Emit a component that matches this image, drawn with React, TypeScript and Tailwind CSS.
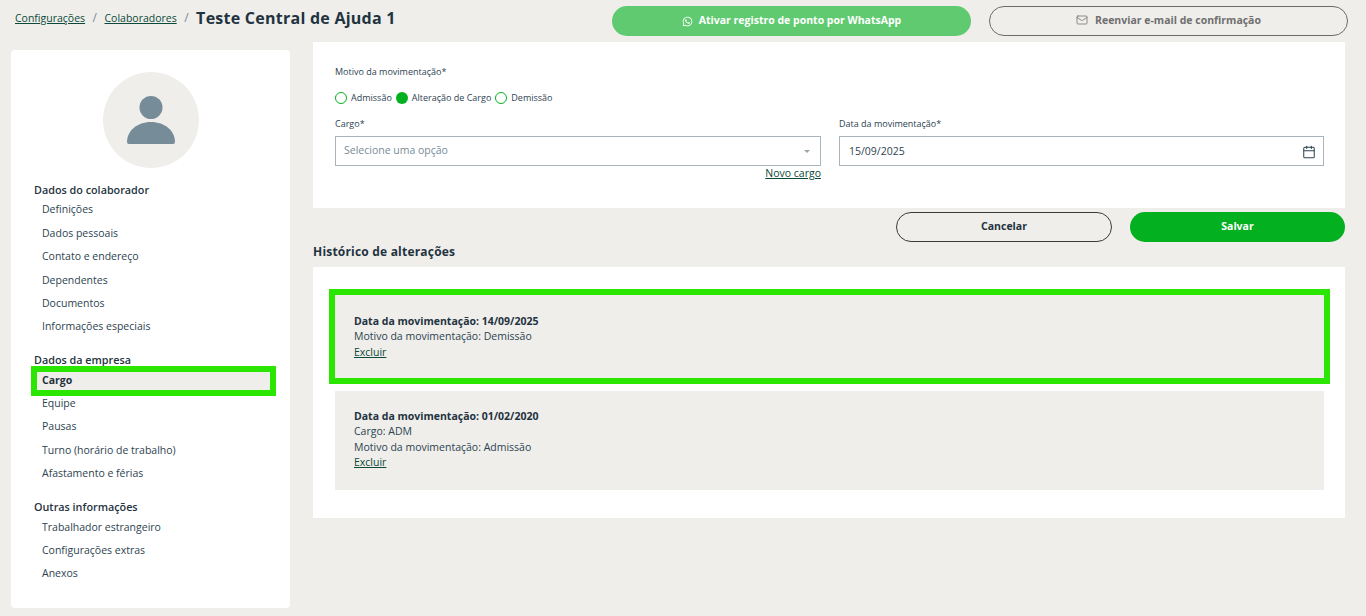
import { Mail, Calendar } from "lucide-react";
import { FaWhatsapp } from "react-icons/fa";

const font = { fontFamily: '"Open Sans", sans-serif' };

const SECTIONS = [
  {
    title: "Dados do colaborador",
    items: ["Definições", "Dados pessoais", "Contato e endereço", "Dependentes", "Documentos", "Informações especiais"],
  },
  {
    title: "Dados da empresa",
    items: ["Cargo", "Equipe", "Pausas", "Turno (horário de trabalho)", "Afastamento e férias"],
  },
  {
    title: "Outras informações",
    items: ["Trabalhador estrangeiro", "Configurações extras", "Anexos"],
  },
];

function Sidebar() {
  return (
    <aside className="w-[279px] h-[558px] shrink-0 bg-white rounded-sm pt-[22px] px-[23px]">
      <div className="mx-auto w-[96px] h-[96px] rounded-full bg-[#efeeeb] flex items-center justify-center">
        <svg width="48" height="48" viewBox="0 0 48 48" fill="#778c99">
          <circle cx="24" cy="11.5" r="11.5" />
          <path d="M0 46C0 35 10 26 24 26s24 9 24 20a2 2 0 0 1-2 2H2a2 2 0 0 1-2-2z" />
        </svg>
      </div>
      <div className="mt-[14px] flex flex-col gap-[13.5px]">
        {SECTIONS.map((s) => (
          <div key={s.title}>
            <h4 className="text-[10.8px] leading-[16px] font-semibold text-[#1f3340]">{s.title}</h4>
            <ul className="mt-[0.6px]">
              {s.items.map((item) =>
                item === "Cargo" ? (
                  <li
                    key={item}
                    className="h-[18px] mt-[3.7px] mb-[2px] ml-[3px] w-[233px] flex items-center pl-[5px] text-[10.5px] font-bold text-[#1f3340] bg-[#efeeeb] outline-[6px] outline-solid outline-[#2ae600]"
                  >
                    {item}
                  </li>
                ) : (
                  <li key={item} className="h-[23.4px] flex items-center pl-[8px] text-[10.5px] text-[#2d4350]">
                    {item}
                  </li>
                ),
              )}
            </ul>
          </div>
        ))}
      </div>
    </aside>
  );
}

function Radio({ label, checked }: { label: string; checked?: boolean }) {
  return (
    <span className="flex items-center gap-[4px]">
      <span
        className={
          checked
            ? "w-[12px] h-[12px] rounded-full bg-[#03b01f]"
            : "w-[12px] h-[12px] rounded-full border border-[#03b01f] bg-white"
        }
      />
      <span className="text-[9px] text-[#2d4350]">{label}</span>
    </span>
  );
}

function HistoryItem({ lines, highlight }: { lines: string[]; highlight?: boolean }) {
  return (
    <div
      className={
        highlight
          ? "bg-[#efeeeb] px-[19px] pt-[18.6px] h-[83px] outline-[6px] outline-solid outline-[#2ae600]"
          : "bg-[#efeeeb] px-[19px] pt-[17.6px] h-[99px]"
      }
    >
      <p className="text-[10.5px] leading-[15.5px] font-bold text-[#1f3340]">{lines[0]}</p>
      {lines.slice(1).map((l) => (
        <p key={l} className="text-[10.5px] leading-[15.5px] text-[#2d4350]">
          {l}
        </p>
      ))}
      <a className="text-[10.5px] leading-[15.5px] underline text-[#0b4a38] block">Excluir</a>
    </div>
  );
}

export default function App() {
  return (
    <div className="w-[1366px] h-[616px] overflow-hidden bg-[#efeeeb] flex flex-col" style={font}>
      <header className="h-[42px] shrink-0 flex items-center pl-[15px] pr-[18px]">
        <nav className="flex items-center h-[36px] w-[597px] -mt-[6px]">
          <a className="mt-[1px] text-[10.5px] underline text-[#0b4a38]">Configurações</a>
          <span className="text-[12px] text-[#778c99] mx-[7.5px]">/</span>
          <a className="mt-[1px] text-[10.5px] underline text-[#0b4a38]">Colaboradores</a>
          <span className="text-[12px] text-[#778c99] mx-[7.5px]">/</span>
          <h1 className="text-[16px] font-bold text-[#1f3340] tracking-[0.25px]">Teste Central de Ajuda 1</h1>
        </nav>
        <button className="w-[359px] h-[30px] rounded-[15px] bg-[#60ca70] text-white text-[10.5px] font-bold flex items-center justify-center gap-[6px]">
          <FaWhatsapp size={11} />
          Ativar registro de ponto por WhatsApp
        </button>
        <button className="ml-[18px] w-[359px] h-[30px] rounded-[15px] border border-[#6b6b6b] text-[#6f6f6f] text-[10.5px] font-bold flex items-center justify-center gap-[7px]">
          <Mail size={12} strokeWidth={1.5} className="-mt-[2px]" />
          Reenviar e-mail de confirmação
        </button>
      </header>
      <div className="flex items-start pl-[11px] pt-[8px]">
        <Sidebar />
        <main className="ml-[23px] w-[1032px] -mt-[8px]">
          <section className="bg-white h-[166px] pt-[22px] pl-[22px] pr-[21px]">
            <p className="text-[9px] leading-[16px] text-[#2d4350]">Motivo da movimentação*</p>
            <div className="mt-[11px] flex items-center gap-[4px] h-[14px]">
              <Radio label="Admissão" />
              <Radio label="Alteração de Cargo" checked />
              <Radio label="Demissão" />
            </div>
            <div className="mt-[12px] flex gap-[18px]">
              <div className="w-[486px]">
                <label className="text-[9px] leading-[14px] block text-[#2d4350]">Cargo*</label>
                <div className="mt-[5px] h-[30px] border border-[#a9b6be] flex items-center justify-between pl-[8px] pr-[10px]">
                  <span className="text-[10.5px] text-[#778c99]">Selecione uma opção</span>
                  <span className="w-0 h-0 border-x-[3px] border-x-transparent border-t-[3px] border-t-[#9aa5ac]" />
                </div>
                <div className="text-right leading-[14px] -mt-[2px]">
                  <a className="text-[10.5px] underline text-[#0b4a38]">Novo cargo</a>
                </div>
              </div>
              <div className="w-[485px]">
                <label className="text-[9px] leading-[14px] block text-[#2d4350]">Data da movimentação*</label>
                <div className="mt-[5px] h-[30px] border border-[#a9b6be] flex items-center justify-between pl-[9px] pr-[7px]">
                  <span className="mt-[1px] text-[10.5px] text-[#2d4350]">15/09/2025</span>
                  <Calendar size={14} strokeWidth={1.75} className="mt-[1px] text-[#2d4350]" />
                </div>
              </div>
            </div>
          </section>
          <div className="mt-[4px] flex justify-end gap-[18px]">
            <button className="w-[216px] h-[30px] rounded-[15px] border border-[#3a3a3a] text-[10.5px] font-bold text-[#1f3340]">
              Cancelar
            </button>
            <button className="w-[215px] h-[30px] rounded-[15px] bg-[#03b01f] text-[10.5px] font-bold text-white">
              Salvar
            </button>
          </div>
          <h2 className="h-[20px] mb-[5px] pt-[0.5px] flex items-center text-[12px] font-bold tracking-[0.2px] text-[#1f3340]">
            Histórico de alterações
          </h2>
          <section className="bg-white h-[251px] pt-[28px] pl-[22px] pr-[21px] flex flex-col gap-[13px]">
            <HistoryItem highlight lines={["Data da movimentação: 14/09/2025", "Motivo da movimentação: Demissão"]} />
            <HistoryItem lines={["Data da movimentação: 01/02/2020", "Cargo: ADM", "Motivo da movimentação: Admissão"]} />
          </section>
        </main>
      </div>
    </div>
  );
}
